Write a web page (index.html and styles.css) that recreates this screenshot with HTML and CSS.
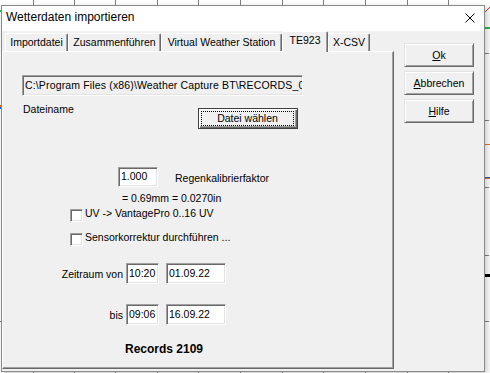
FILE: index.html
```html
<!DOCTYPE html>
<html lang="de">
<head>
    <meta charset="UTF-8">
    <title>Wetterdaten importieren</title>
    <link rel="stylesheet" href="styles.css">
</head>
<body>
<!-- Diagramm im Hintergrund (nur Ränder sichtbar) -->
<svg class="chart" width="490" height="373" viewBox="0 0 490 373">
    <g stroke="#808080" stroke-width="1">
        <line x1="33.5" y1="0" x2="33.5" y2="5"/>
        <line x1="74.5" y1="0" x2="74.5" y2="5"/>
        <line x1="115.5" y1="0" x2="115.5" y2="5"/>
        <line x1="157.5" y1="0" x2="157.5" y2="5"/>
        <line x1="198.5" y1="0" x2="198.5" y2="5"/>
        <line x1="240.5" y1="0" x2="240.5" y2="5"/>
        <line x1="282.5" y1="0" x2="282.5" y2="5"/>
        <line x1="323.5" y1="0" x2="323.5" y2="5"/>
        <line x1="365.5" y1="0" x2="365.5" y2="5"/>
        <line x1="407.5" y1="0" x2="407.5" y2="5"/>
        <line x1="448.5" y1="0" x2="448.5" y2="5"/>
        <line x1="33.5" y1="372" x2="33.5" y2="373"/>
        <line x1="74.5" y1="372" x2="74.5" y2="373"/>
        <line x1="115.5" y1="372" x2="115.5" y2="373"/>
        <line x1="157.5" y1="372" x2="157.5" y2="373"/>
        <line x1="198.5" y1="372" x2="198.5" y2="373"/>
        <line x1="240.5" y1="372" x2="240.5" y2="373"/>
        <line x1="282.5" y1="372" x2="282.5" y2="373"/>
        <line x1="323.5" y1="372" x2="323.5" y2="373"/>
        <line x1="365.5" y1="372" x2="365.5" y2="373"/>
        <line x1="407.5" y1="372" x2="407.5" y2="373"/>
        <line x1="448.5" y1="372" x2="448.5" y2="373"/>
        <line x1="485" y1="53.5" x2="489" y2="53.5"/>
        <line x1="485" y1="120.5" x2="489" y2="120.5"/>
        <line x1="485" y1="187.5" x2="489" y2="187.5"/>
        <line x1="485" y1="255.5" x2="489" y2="255.5"/>
        <line x1="485" y1="321.5" x2="489" y2="321.5"/>
        <line x1="0" y1="321.5" x2="1" y2="321.5"/>
    </g>
    <line x1="485" y1="12" x2="490" y2="7" stroke="#e03020"/>
    <rect x="485" y="27" width="5" height="2" fill="#22c040"/>
    <rect x="485" y="144" width="5" height="1" fill="#f07020"/>
    <rect x="485" y="177" width="5" height="1" fill="#2060c0"/>
    <rect x="485" y="178" width="5" height="1" fill="#f07020"/>
    <rect x="485" y="274" width="5" height="3" fill="#000"/>
    <rect x="0" y="10" width="1" height="2" fill="#22c040"/>
    <rect x="0" y="105" width="1" height="2" fill="#f07020"/>
    <rect x="0" y="107" width="1" height="2" fill="#2060c0"/>
</svg>

<div class="dialog">
    <div class="titlebar">
        <span class="title">Wetterdaten importieren</span>
        <svg class="close" width="10" height="10" viewBox="0 0 10 10">
            <path d="M0.5 0.5 L9.5 9.5 M9.5 0.5 L0.5 9.5" stroke="#000" stroke-width="1" fill="none"/>
        </svg>
    </div>
    <div class="dlg-body">
        <div class="tabs-col">
            <div class="tabs">
                <div class="tab tab-import">Importdatei</div>
                <div class="tab tab-merge">Zusammenführen</div>
                <div class="tab tab-vws">Virtual Weather Station</div>
                <div class="tab tab-te active">TE923</div>
                <div class="tab tab-csv">X-CSV</div>
            </div>
            <div class="panel">
                <div class="path-field">C:\Program Files (x86)\Weather Capture BT\RECORDS_0</div>
                <div class="file-row">
                    <span class="file-label">Dateiname</span>
                    <button class="btn btn-file"><span class="focus">Datei wählen</span></button>
                </div>
                <div class="rain-row">
                    <div class="edit rain-edit">1.000</div>
                    <span class="rain-label">Regenkalibrierfaktor</span>
                </div>
                <div class="rain-info">= 0.69mm = 0.0270in</div>
                <div class="check-row check-uv">
                    <span class="checkbox"></span>
                    <span class="check-label">UV -&gt; VantagePro 0..16 UV</span>
                </div>
                <div class="check-row check-sensor">
                    <span class="checkbox"></span>
                    <span class="check-label">Sensorkorrektur durchführen ...</span>
                </div>
                <div class="time-row time-from">
                    <span class="time-label">Zeitraum von</span>
                    <div class="edit time">10:20</div>
                    <div class="edit date">01.09.22</div>
                </div>
                <div class="time-row time-to">
                    <span class="time-label">bis</span>
                    <div class="edit time">09:06</div>
                    <div class="edit date">16.09.22</div>
                </div>
                <div class="records">Records 2109</div>
            </div>
        </div>
        <div class="buttons">
            <button class="btn"><u>O</u>k</button>
            <button class="btn"><u>A</u>bbrechen</button>
            <button class="btn"><u>H</u>ilfe</button>
        </div>
    </div>
</div>
</body>
</html>
```

FILE: styles.css
```css
@charset "UTF-8";
/* reset */
*{box-sizing:border-box}
html,body{margin:0;padding:0}
body{
    width:490px;
    height:373px;
    overflow:hidden;
    position:relative;
    background:#fff;
    font:10.5px/13px "Liberation Sans", Arial, sans-serif;
    color:#000;
}
button{font:inherit;color:inherit;padding:0;margin:0}

.chart{
    position:absolute;
    left:0;
    top:0;
    shape-rendering:crispEdges;
}

/* Fenster */
.dialog{
    position:absolute;
    left:1px;
    top:5px;
    width:484px;
    height:367px;
    background:#f0f0f0;
    border:1px solid #8a8a8a;
    box-shadow:2px 2px 6px rgba(0,0,0,.22);
    display:flex;
    flex-direction:column;
}
.titlebar{
    height:25px;
    flex:none;
    background:#fff;
    display:flex;
    align-items:center;
    justify-content:space-between;
    padding:0 9px 2px 4px;
    font-size:12px;
    line-height:23px;
}
.close{margin-top:1px}

.dlg-body{
    flex:1;
    display:flex;
    align-items:flex-start;
}
.tabs-col{
    width:392px;
    display:flex;
    flex-direction:column;
}

/* Reiter */
.tabs{
    height:20px;
    display:flex;
    align-items:flex-end;
    padding-left:3px;
    position:relative;
    z-index:1;
}
.tab{
    height:18px;
    border-top:1px solid #fff;
    border-left:1px solid #fff;
    border-right:1px solid #696969;
    border-radius:2px 2px 0 0;
    box-shadow:inset -1px 0 #a0a0a0;
    text-align:center;
    line-height:17px;
    white-space:nowrap;
}
.tab-import{width:63px}
.tab-merge{width:93px}
.tab-vws{width:121px}
.tab-te{width:46px}
.tab-csv{width:42px}
.tab.active{
    height:21px;
    margin-bottom:-1px;
    background:#f0f0f0;
    line-height:16px;
}

.panel{
    height:318px;
    border:1px solid;
    border-color:#fff #696969 #696969 #fff;
    box-shadow:inset -1px -1px #a0a0a0;
}

/* Eingabefelder */
.path-field,.edit,.checkbox{
    border:1px solid;
    border-color:#a0a0a0 #fff #fff #a0a0a0;
    box-shadow:inset 1px 1px #696969, inset -1px -1px #e3e3e3;
}
.path-field{
    margin:23px 0 0 19px;
    width:281px;
    height:21px;
    padding-left:2px;
    line-height:19px;
    letter-spacing:.15px;
    white-space:nowrap;
    overflow:hidden;
}
.edit{
    background:#fff;
    height:20px;
    padding-left:2px;
    line-height:16px;
    white-space:nowrap;
}

.file-row{
    display:flex;
    align-items:flex-start;
    margin-top:7px;
}
.file-label{
    width:195px;
    padding-left:20px;
}

/* Schaltflächen */
.btn{
    display:block;
    width:70px;
    height:24px;
    background:#f0f0f0;
    border:1px solid;
    border-color:#e3e3e3 #696969 #696969 #e3e3e3;
    box-shadow:inset 1px 1px #fff, inset -1px -1px #a0a0a0;
    text-align:center;
    line-height:20px;
}
.btn-file{
    margin-top:5px;
    width:100px;
    height:21px;
    border-color:#404040;
    box-shadow:inset 1px 1px #fff, inset -1px -1px #696969, inset -2px -2px #a0a0a0;
    padding:2px 3px 3px 2px;
    line-height:13px;
}
.btn-file .focus{
    display:block;
    height:15px;
    border:1px dotted #000;
}

.rain-row{
    display:flex;
    align-items:center;
    margin-top:38px;
}
.rain-edit{
    margin-left:115px;
    width:40px;
}
.rain-label{
    margin-left:17px;
    padding-top:2px;
}
.rain-info{margin:5px 0 0 119px}

.check-row{
    display:flex;
    align-items:flex-start;
    height:13px;
    margin-left:67px;
}
.check-uv{margin-top:4px}
.check-sensor{margin-top:11px}
.checkbox{
    width:13px;
    height:13px;
    background:#fff;
    margin-right:2px;
}
.check-label{margin-top:-2px}

.time-row{
    display:flex;
    align-items:center;
}
.time-from{margin-top:17px}
.time-to{margin-top:20px}
.time-label{
    width:120px;
    text-align:right;
    padding-top:2px;
}
.time-row .edit{
    height:21px;
    line-height:18px;
}
.time{
    width:33px;
    margin-left:3px;
}
.date{
    width:60px;
    margin-left:7px;
}

.records{
    margin:17px 0 0 122px;
    font-weight:bold;
    font-size:12px;
    line-height:14px;
}

.buttons{
    display:flex;
    flex-direction:column;
    gap:4px;
    margin:12px 0 0 10px;
}
```
